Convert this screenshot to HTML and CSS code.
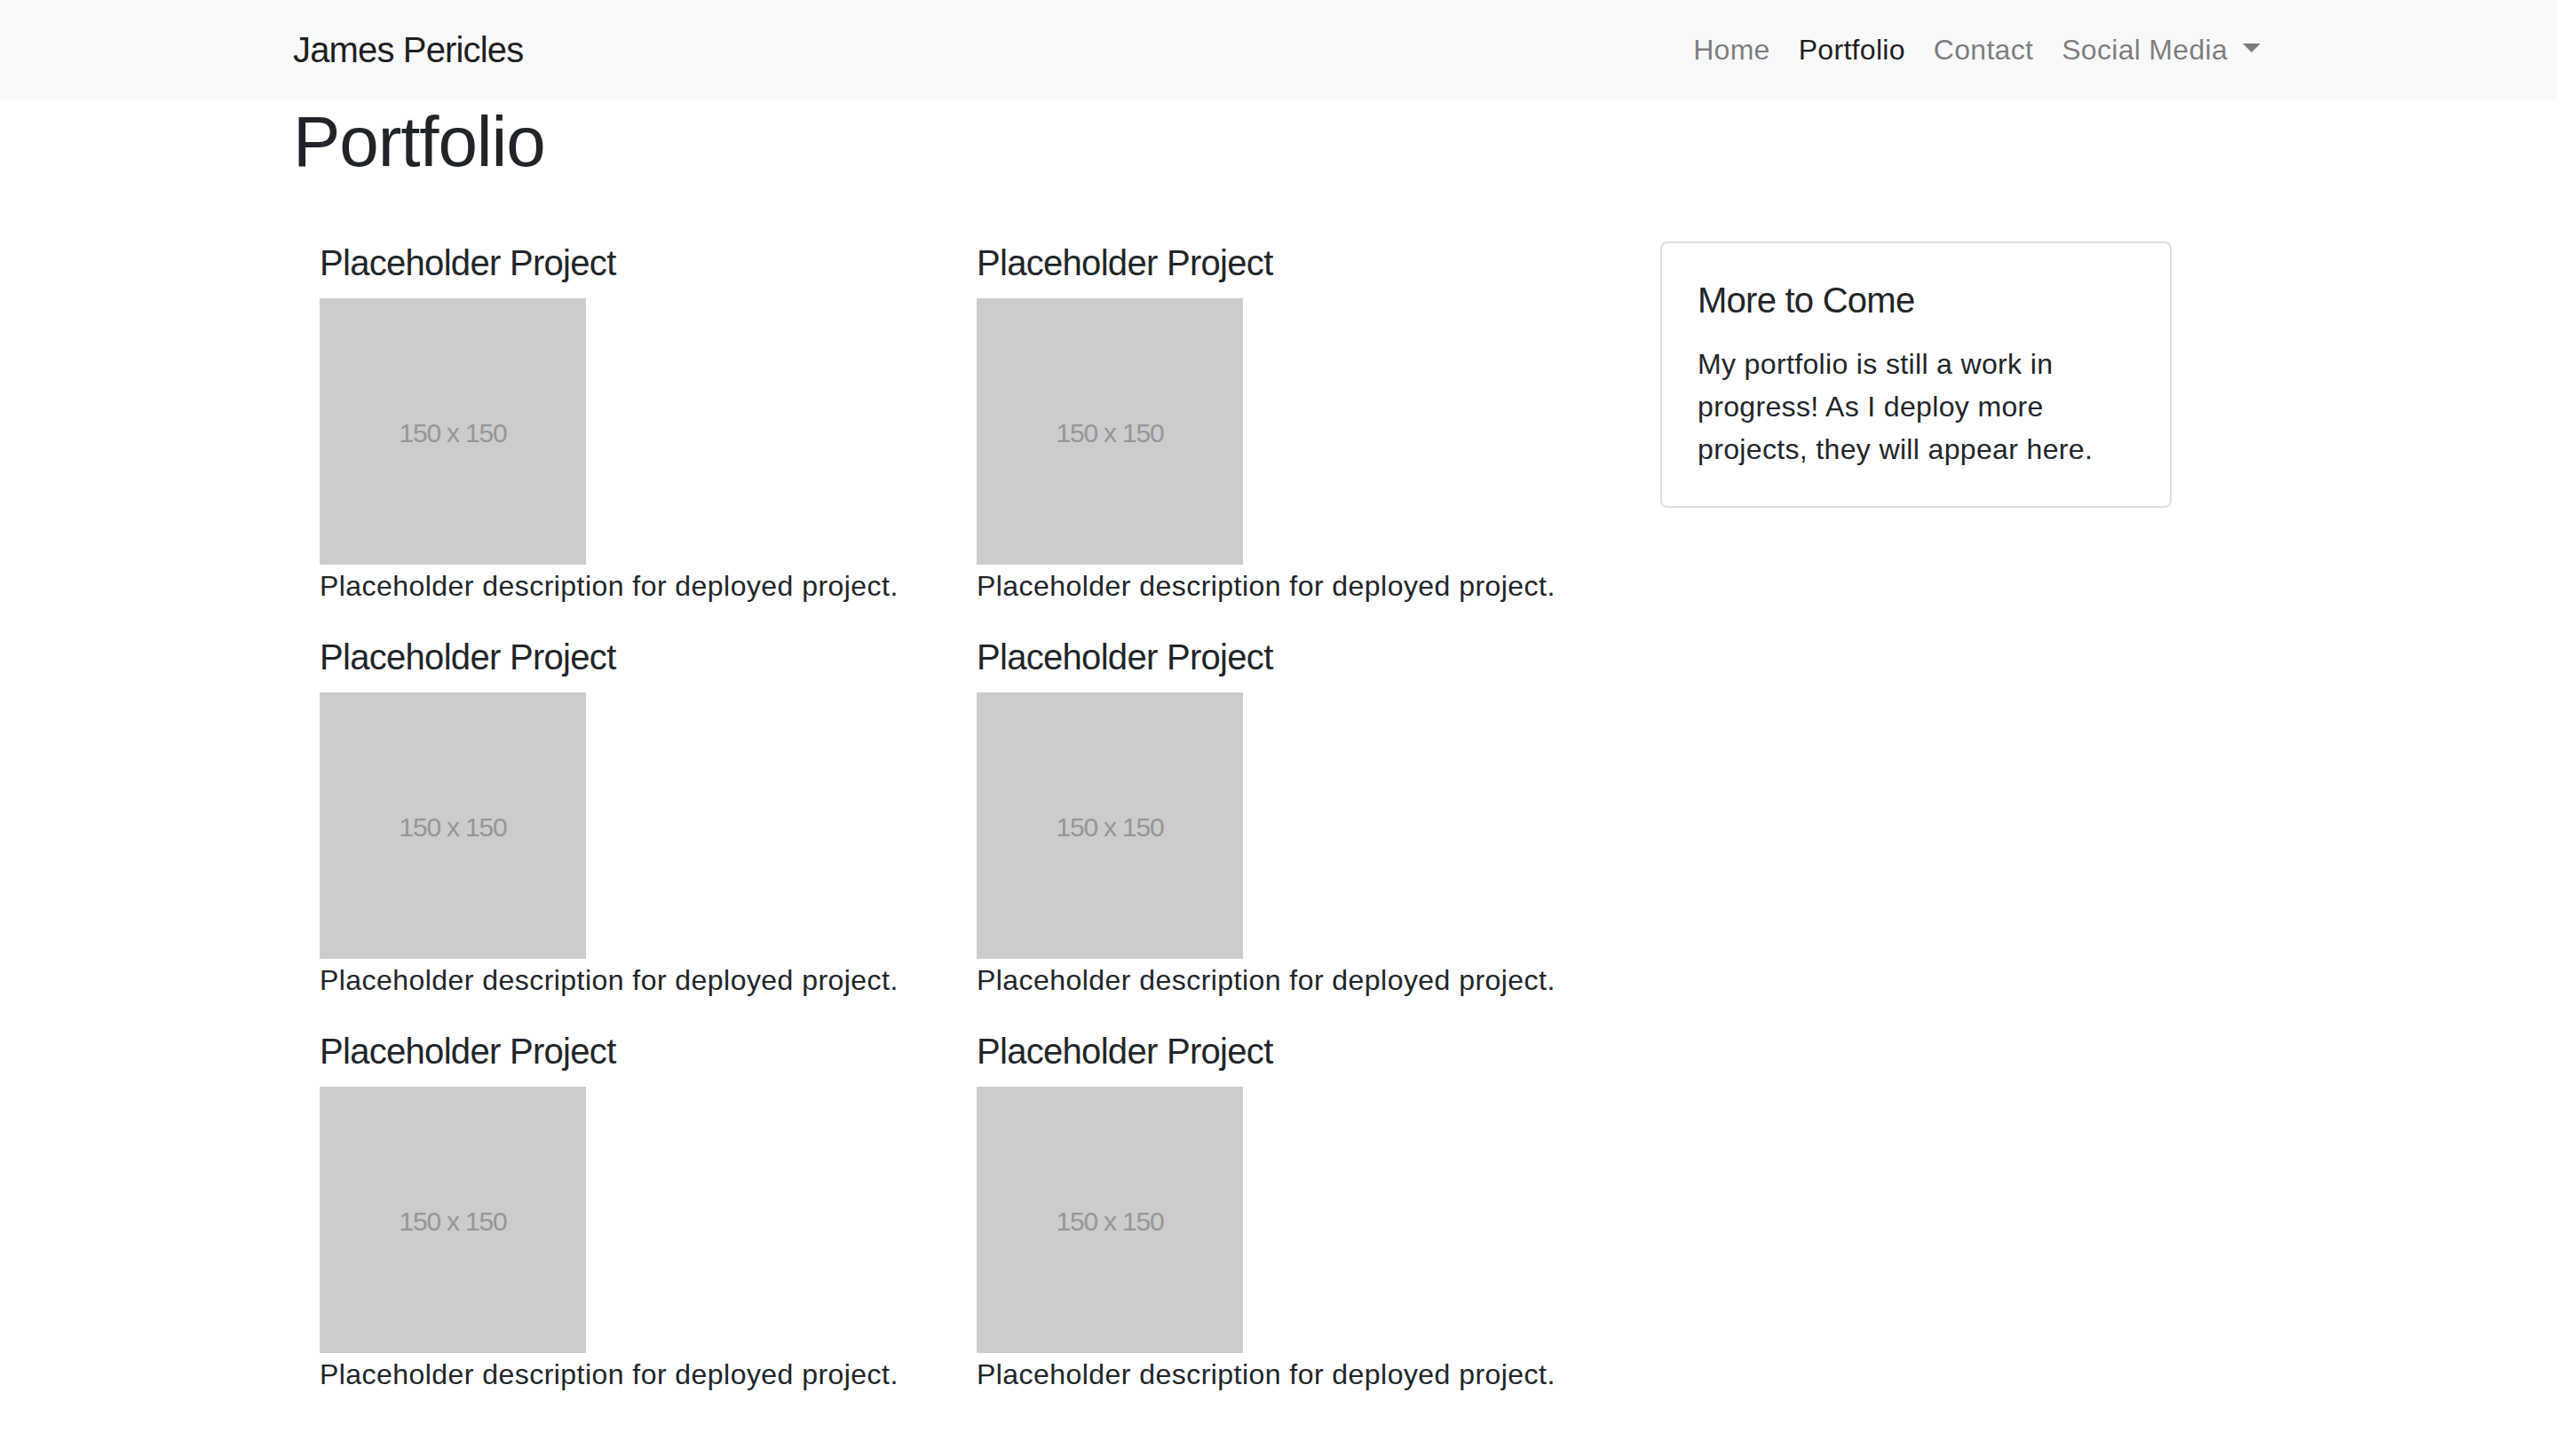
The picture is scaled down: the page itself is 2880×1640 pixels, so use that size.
FILE: index.html
```html
<!DOCTYPE html>
<html lang="en">
<head>
<meta charset="utf-8">
<title>Portfolio - James Pericles</title>
<link rel="stylesheet" href="styles.css">
</head>
<body>
<nav class="navbar">
  <div class="navbar-inner">
    <a class="brand" href="#">James Pericles</a>
    <ul class="nav">
      <li><a class="nav-link" href="#">Home</a></li>
      <li><a class="nav-link active" href="#">Portfolio</a></li>
      <li><a class="nav-link" href="#">Contact</a></li>
      <li><a class="nav-link dropdown" href="#">Social Media<span class="caret"></span></a></li>
    </ul>
  </div>
</nav>
<main class="container">
  <h1 class="page-title">Portfolio</h1>
  <div class="main-row">
    <div class="projects">
      <div class="project">
        <h5 class="project-title">Placeholder Project</h5>
        <div class="thumb"><span>150 x 150</span></div>
        <p class="project-desc">Placeholder description for deployed project.</p>
      </div>
      <div class="project">
        <h5 class="project-title">Placeholder Project</h5>
        <div class="thumb"><span>150 x 150</span></div>
        <p class="project-desc">Placeholder description for deployed project.</p>
      </div>
      <div class="project">
        <h5 class="project-title">Placeholder Project</h5>
        <div class="thumb"><span>150 x 150</span></div>
        <p class="project-desc">Placeholder description for deployed project.</p>
      </div>
      <div class="project">
        <h5 class="project-title">Placeholder Project</h5>
        <div class="thumb"><span>150 x 150</span></div>
        <p class="project-desc">Placeholder description for deployed project.</p>
      </div>
      <div class="project">
        <h5 class="project-title">Placeholder Project</h5>
        <div class="thumb"><span>150 x 150</span></div>
        <p class="project-desc">Placeholder description for deployed project.</p>
      </div>
      <div class="project">
        <h5 class="project-title">Placeholder Project</h5>
        <div class="thumb"><span>150 x 150</span></div>
        <p class="project-desc">Placeholder description for deployed project.</p>
      </div>
    </div>
    <aside class="card">
      <h5 class="card-title">More to Come</h5>
      <p class="card-text">My portfolio is still a work in progress! As I deploy more projects, they will appear here.</p>
    </aside>
  </div>
</main>
</body>
</html>
```

FILE: styles.css
```css
* { box-sizing: border-box; }

html, body {
  margin: 0;
  padding: 0;
}

body {
  font-family: "Liberation Sans", Arial, sans-serif;
  font-size: 32px;
  line-height: 1.5;
  color: #212529;
  background: #fff;
}

a { text-decoration: none; }

.navbar {
  background: #f8f9fa;
  padding: 16px 0;
  height: 112px;
}

.navbar-inner {
  width: 2280px;
  margin: 0 auto;
  padding: 0 18px 0 30px;
  display: flex;
  align-items: center;
  justify-content: space-between;
}

.brand {
  font-size: 40px;
  line-height: 60px;
  padding: 10px 0;
  color: rgba(0,0,0,.9);
  letter-spacing: -0.85px;
}

.nav {
  list-style: none;
  margin: 0;
  padding: 0;
  display: flex;
}

.nav-link {
  display: block;
  padding: 16px;
  line-height: 48px;
  color: rgba(0,0,0,.5);
  letter-spacing: 0.3px;
}

.nav-link.active { color: rgba(0,0,0,.9); }

.caret {
  display: inline-block;
  margin-left: 17px;
  vertical-align: 8px;
  border-top: 10px solid rgba(0,0,0,.5);
  border-left: 10px solid transparent;
  border-right: 10px solid transparent;
  width: 0;
  height: 0;
}

.container {
  width: 2280px;
  margin: 0 auto;
  padding: 0 30px;
}

.page-title {
  margin: 0 0 16px;
  font-size: 80px;
  line-height: 96px;
  font-weight: 500;
  letter-spacing: -1.1px;
}

.main-row {
  display: flex;
  align-items: flex-start;
  margin-top: 64px;
}

.projects {
  display: grid;
  grid-template-columns: 740px 740px;
  padding-left: 30px;
}

.project-title {
  margin: 0 0 16px;
  font-size: 40px;
  line-height: 48px;
  font-weight: 500;
  letter-spacing: -0.7px;
}

.thumb {
  width: 300px;
  height: 300px;
  background: #cccccc;
  display: flex;
  align-items: center;
  justify-content: center;
}

.thumb span {
  font-size: 30px;
  color: #969696;
  letter-spacing: -1.2px;
  line-height: 1;
  margin-top: 4px;
}

.project-desc {
  margin: 0 0 32px;
  letter-spacing: 0.45px;
}

.card {
  margin-left: 30px;
  width: 576px;
  border: 2px solid rgba(0,0,0,.125);
  border-radius: 8px;
  padding: 40px;
}

.card-title {
  margin: 0 0 24px;
  font-size: 40px;
  line-height: 48px;
  font-weight: 500;
  letter-spacing: -0.75px;
}

.card-text {
  margin: 0;
  letter-spacing: 0.35px;
}
```
